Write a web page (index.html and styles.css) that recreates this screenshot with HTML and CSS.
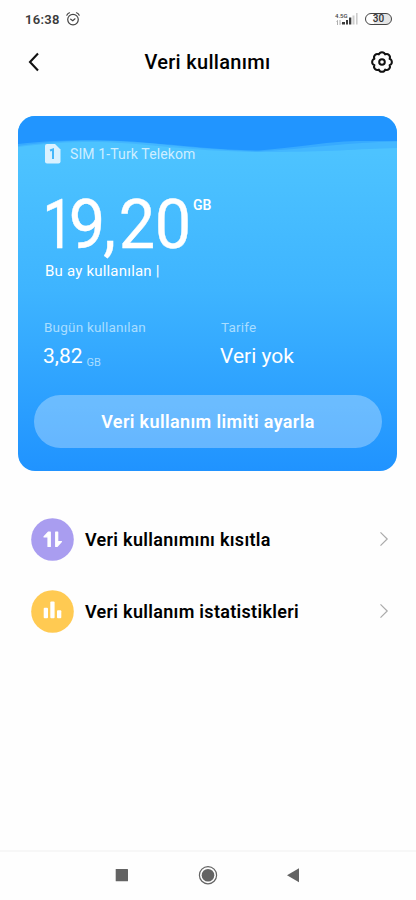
FILE: index.html
```html
<!DOCTYPE html>
<html lang="tr">
<head>
<meta charset="utf-8">
<title>Veri kullanımı</title>
<link rel="stylesheet" href="styles.css">
</head>
<body>
<div class="screen">
  <div class="status">
    <span class="time">16:38</span>
    <svg class="alarm" width="14" height="14" viewBox="0 0 14 14" fill="none" stroke="#444" stroke-width="1.2" stroke-linecap="round"><circle cx="7" cy="7.6" r="5.3"/><path d="M4.7 7.2L6.8 8.7L9 6.8M.8 3.2Q1.7 1.4 3.5.8M13.2 3.2Q12.3 1.4 10.5.8"/></svg>
    <div class="network">
      <span class="gen">4.5G</span>
      <svg width="8" height="7" viewBox="0 0 8 7"><path d="M2.500 6V1.500M1.500 2.500L2.500 1.500M5 1V5.500M5 5.500L6 4.500" fill="none" stroke="#999" stroke-width=".8"/></svg>
    </div>
    <svg class="bars" width="17" height="12" viewBox="0 0 17 12"><g fill="#3b3b3b"><rect x="0" y="9" width="3" height="2.5"/><rect x="4" y="7" width="2" height="4.500"/><rect x="7" y="4.500" width="2.300" height="7"/></g><g fill="#ccc"><rect x="10.500" y="2.500" width="2" height="9"/><rect x="14" y="0" width="1.600" height="11.500"/></g></svg>
    <span class="battery">30</span>
  </div>
  <header class="header">
    <svg width="12" height="20" viewBox="0 0 12 20" fill="none" stroke="#111" stroke-width="2.100"><path d="M11 1.500L3 10L11 18.500"/></svg>
    <h1>Veri kullanımı</h1>
    <svg width="22" height="22" viewBox="0 0 22 22" fill="none" stroke="#111" stroke-width="2"><path stroke-linejoin="round" d="M7.860 3.420A3.300 3.300 0 0 1 14.140 3.420A3.300 3.300 0 0 1 18.580 7.860A3.300 3.300 0 0 1 18.580 14.140A3.300 3.300 0 0 1 14.140 18.580A3.300 3.300 0 0 1 7.860 18.580A3.300 3.300 0 0 1 3.420 14.140A3.300 3.300 0 0 1 3.420 7.860A3.300 3.300 0 0 1 7.860 3.420Z"/><circle cx="11" cy="11" r="2.800"/></svg>
  </header>
  <section class="card">
    <svg class="wave" width="379" height="38" viewBox="0 0 379 38"><path fill="#2195ff" d="M0 0H379V38H0Z"/><path fill="#37aaff" d="M0 28C45 23 90 24 120 26C170 30 200 34 241 34.500C285 31 310 25 345 25H379V38H0Z"/><path fill="#43b7ff" d="M0 30C60 22 100 25 140 28C180 32 215 35 240 35.500C290 33 330 26 379 25.500V38H0Z"/><path fill="#4dc3ff" d="M0 31C60 23 100 26 140 30C180 34 215 36 250 36C310 36 340 33 379 32V38H0Z"/></svg>
    <div class="sim">
      <svg width="16" height="20" viewBox="0 0 16 20"><path fill="#d9f1ff" d="M2 0H10L15.500 5.500V17.500Q15.500 19.500 13.500 19.500H2Q0 19.500 0 17.500V2Q0 0 2 0Z"/><path d="M5 6.500L8 5.500V15" fill="none" stroke="#45b7fa" stroke-width="2"/></svg>
      <span>SIM 1-Turk Telekom</span>
    </div>
    <div class="total"><span class="amount"><span class="one">1</span><span class="nine">9</span><span class="comma">,</span>20</span><span class="unit">GB</span></div>
    <div class="caption">Bu ay kullanılan |</div>
    <div class="stats">
      <div><div class="label">Bugün kullanılan</div><div class="value">3,82<small>GB</small></div></div>
      <div><div class="label">Tarife</div><div class="value">Veri yok</div></div>
    </div>
    <button class="limit">Veri kullanım limiti ayarla</button>
  </section>
  <nav class="list">
    <a class="row">
      <svg width="43" height="43" viewBox="0 0 43 43"><circle cx="21.500" cy="21.500" r="21.300" fill="#a99df0"/><g fill="#fff" stroke="#fff" stroke-width="1.200" stroke-linejoin="round"><path d="M17.500 14H19.300V28.500H17V18.800H12.900Z"/><path d="M24.700 14H26.700V23.700H30.500L26 28.500H24.700Z"/></g></svg>
      <span>Veri kullanımını kısıtla</span>
      <svg class="chev" width="10" height="16" viewBox="0 0 10 16"><path d="M1.500 1.300L8.200 8L1.500 14.700"/></svg>
    </a>
    <a class="row second">
      <svg width="43" height="43" viewBox="0 0 43 43"><circle cx="21.500" cy="21.500" r="21.300" fill="#ffca52"/><g fill="#fff"><rect x="12.700" y="17.800" width="4.300" height="10.500" rx="1"/><rect x="19.300" y="11.500" width="4.300" height="16.800" rx="1"/><rect x="26" y="20.200" width="4.300" height="8.100" rx="1"/></g></svg>
      <span>Veri kullanım istatistikleri</span>
      <svg class="chev" width="10" height="16" viewBox="0 0 10 16"><path d="M1.500 1.300L8.200 8L1.500 14.700"/></svg>
    </a>
  </nav>
  <footer class="navbar">
    <svg width="20" height="20" viewBox="0 0 20 20"><rect x="3.700" y="3" width="12.300" height="12.200" rx=".5" fill="#636363"/></svg>
    <svg width="20" height="20" viewBox="0 0 20 20"><circle cx="10" cy="9.200" r="8.600" fill="none" stroke="#636363" stroke-width="1.200"/><circle cx="10" cy="9.200" r="6.300" fill="#636363"/></svg>
    <svg width="20" height="20" viewBox="0 0 20 20"><path d="M4 9.200L16 2.200V16.200Z" fill="#636363"/></svg>
  </footer>
</div>
</body>
</html>
```
FILE: styles.css
```css
* { box-sizing: border-box; }
body { margin: 0; background: #fefefe; font-family: Roboto, "Liberation Sans", sans-serif; color: #000; }
.screen { width: 416px; height: 900px; display: flex; flex-direction: column; overflow: hidden; }
svg { display: block; flex: none; }
.status { height: 38px; display: flex; align-items: center; padding: 0 24px 0 25px; }
.time { font-size: 13px; font-weight: 600; letter-spacing: .3px; color: #3b3b3b; width: 41px; }
.network { margin-left: auto; width: 8px; }
.gen { display: block; font-size: 6px; line-height: 6px; font-weight: 500; color: #444; width: 15px; }
.bars { margin: 0 6px 0 -1px; }
.battery { width: 27px; height: 12px; border: 1px solid #444; border-radius: 6px; background: linear-gradient(90deg, #fff 30%, #e6e6e6 30%); font-size: 10px; line-height: 10px; font-weight: 500; text-align: center; color: #333; }
.header { height: 48px; display: flex; align-items: center; justify-content: space-between; padding: 0 23px 0 27px; }
h1 { margin: 0 0 0 5px; font-size: 20px; font-weight: 500; line-height: 24px; letter-spacing: .3px; }
.card { position: relative; margin: 30px 19px 0 18px; height: 355px; border-radius: 17px; overflow: hidden; background: linear-gradient(#4dc3ff 0, #4dc3ff 37px, #3eb4ff 175px, #2093ff 100%); color: #fff; }
.wave { position: absolute; left: 0; top: 0; }
.sim { position: relative; display: flex; gap: 9px; padding: 28px 0 0 27px; height: 47px; align-items: center; font-size: 14px; letter-spacing: .12px; color: #cfeeff; }
.total { display: flex; height: 91px; padding: 33px 0 0 21.500px; }
.amount { white-space: nowrap; flex: none; font-size: 69px; line-height: 58px; width: 153.500px; letter-spacing: -.4px; transform: scaleX(.94); transform-origin: 0 0; -webkit-text-stroke: .4px #fff; }
.one { display: inline-block; width: 30.700px; letter-spacing: 0; transform: translateX(2px) scaleX(.85); transform-origin: 5px 0; }
.nine { letter-spacing: -2.100px; }
.comma { letter-spacing: 2.700px; }
.unit { font-size: 14px; font-weight: 600; line-height: 18px; }
.caption { padding-left: 27px; margin-top: 7px; font-size: 15px; line-height: 20px; letter-spacing: .2px; }
.stats { display: grid; grid-template-columns: 177px 1fr; padding: 37px 0 0 26px; }
.label { font-size: 13.500px; line-height: 18px; letter-spacing: .2px; color: #a9ddff; }
.value { font-size: 21px; line-height: 26px; margin: 7px 0 0 -1px; }
.value small { font-size: 11px; line-height: 11px; color: #a9ddff; margin-left: 4px; position: relative; top: 3px; }
.limit { display: block; width: 348px; height: 53px; margin: 26px 0 0 16px; border: 0; border-radius: 27px; background: rgba(255,255,255,.3); color: #fff; font: 600 18px/53px Roboto, sans-serif; letter-spacing: .36px; padding: 0; }
.list { padding: 46px 27px 0 31px; }
.row { height: 44px; display: flex; align-items: center; font-size: 18px; font-weight: 600; letter-spacing: .3px; }
.row span { margin-left: 11px; }
.second { margin-top: 28px; }
.chev { margin-left: auto; fill: none; stroke: #aaa; stroke-width: 1.200px; }
.navbar { margin-top: auto; height: 50px; border-top: 2px solid #f7f7f7; display: flex; justify-content: space-between; align-items: center; padding: 0 113px 0 112px; }
```
